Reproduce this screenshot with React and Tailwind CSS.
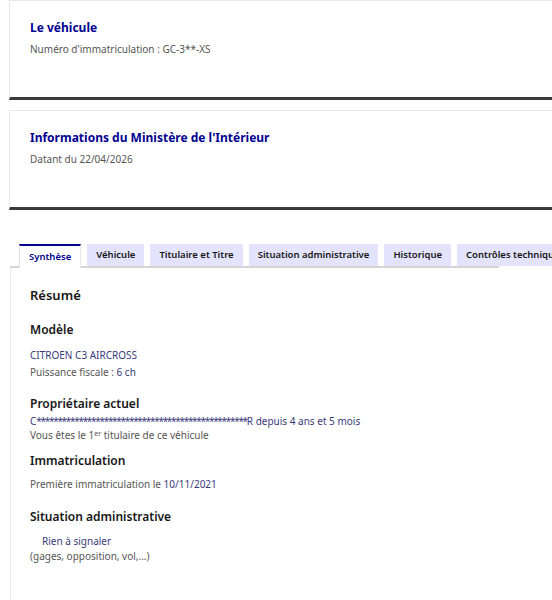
const tabs = [
  'Synthèse',
  'Véhicule',
  'Titulaire et Titre',
  'Situation administrative',
  'Historique',
  'Contrôles techniques',
];

function InfoCard({ title, subtitle }) {
  return (
    <div className="ml-[9px] h-[100px] border-l border-t border-[#e8e8e8] border-b-[3px] border-b-[#3a3a3a] pl-5 pt-[17px]">
      <h2 className="text-[12px] font-bold leading-5 text-[#000091]">{title}</h2>
      <p className="mt-[1px] text-[10px] leading-5 text-[#555]">{subtitle}</p>
    </div>
  );
}

function Section({ title, children, className = '' }) {
  return (
    <div className={className}>
      <h3 className="text-[12px] font-semibold leading-5 text-[#161616]">{title}</h3>
      {children}
    </div>
  );
}

export default function App() {
  const stars = '*'.repeat(50);

  return (
    <div className="w-[552px] min-h-[600px] overflow-hidden bg-white font-['Noto_Sans',sans-serif]">
      <div className="w-[620px]">
        <InfoCard title="Le véhicule" subtitle="Numéro d'immatriculation : GC-3**-XS" />
        <div className="h-[10px]" />
        <InfoCard title="Informations du Ministère de l'Intérieur" subtitle="Datant du 22/04/2026" />

        {/* Tabs */}
        <div className="mt-[34px] ml-[10px]">
          <div className="flex gap-[6px] pl-[9px] shadow-[inset_0_-2px_0_0_#d5d5d5] w-[489px]">
            {tabs.map((t, i) => (
              <div
                key={t}
                className={`shrink-0 flex items-center px-[9px] text-[9.5px] font-semibold whitespace-nowrap ${
                  i === 0
                    ? 'h-[24px] bg-white border-t-2 border-[#000091] border-x border-x-[#e5e5e5] text-[#000091]'
                    : 'h-[22px] mb-[2px] bg-[#e3e3fd] text-[#161616]'
                }`}
              >
                {t}
              </div>
            ))}
          </div>

          {/* Panel */}
          <div className="border-l border-[#e8e8e8] pl-[19px] pt-[15px] pb-10 min-h-[340px]">
            <h2 className="text-[13px] font-semibold leading-6 text-[#161616]">Résumé</h2>

            <Section title="Modèle" className="mt-[13px]">
              <p className="mt-[7px] text-[10px] leading-[17px] text-[#3a3a7a]">CITROEN C3 AIRCROSS</p>
              <p className="text-[10px] leading-[17px] text-[#555]">
                Puissance fiscale : <span className="text-[#3a3a7a]">6 ch</span>
              </p>
            </Section>

            <Section title="Propriétaire actuel" className="mt-[13px]">
              <p className="text-[10px] leading-[15px] text-[#3a3a7a]">
                C<span className="tracking-[-1.3px]">{stars}</span>R depuis 4 ans et 5 mois
              </p>
              <p className="-mt-[1px] text-[10px] leading-[15px] text-[#555]">
                Vous êtes le 1<sup className="text-[7px]">er</sup> titulaire de ce véhicule
              </p>
            </Section>

            <Section title="Immatriculation" className="mt-[8px]">
              <p className="mt-[5px] text-[10px] leading-[17px] text-[#555]">
                Première immatriculation le <span className="text-[#3a3a7a]">10/11/2021</span>
              </p>
            </Section>

            <Section title="Situation administrative" className="mt-[14px]">
              <p className="mt-[7px] pl-3 text-[10px] leading-[15px] text-[#3a3a7a]">Rien à signaler</p>
              <p className="text-[10px] leading-[15px] text-[#555]">(gages, opposition, vol,...)</p>
            </Section>
          </div>
        </div>
      </div>
    </div>
  );
}
